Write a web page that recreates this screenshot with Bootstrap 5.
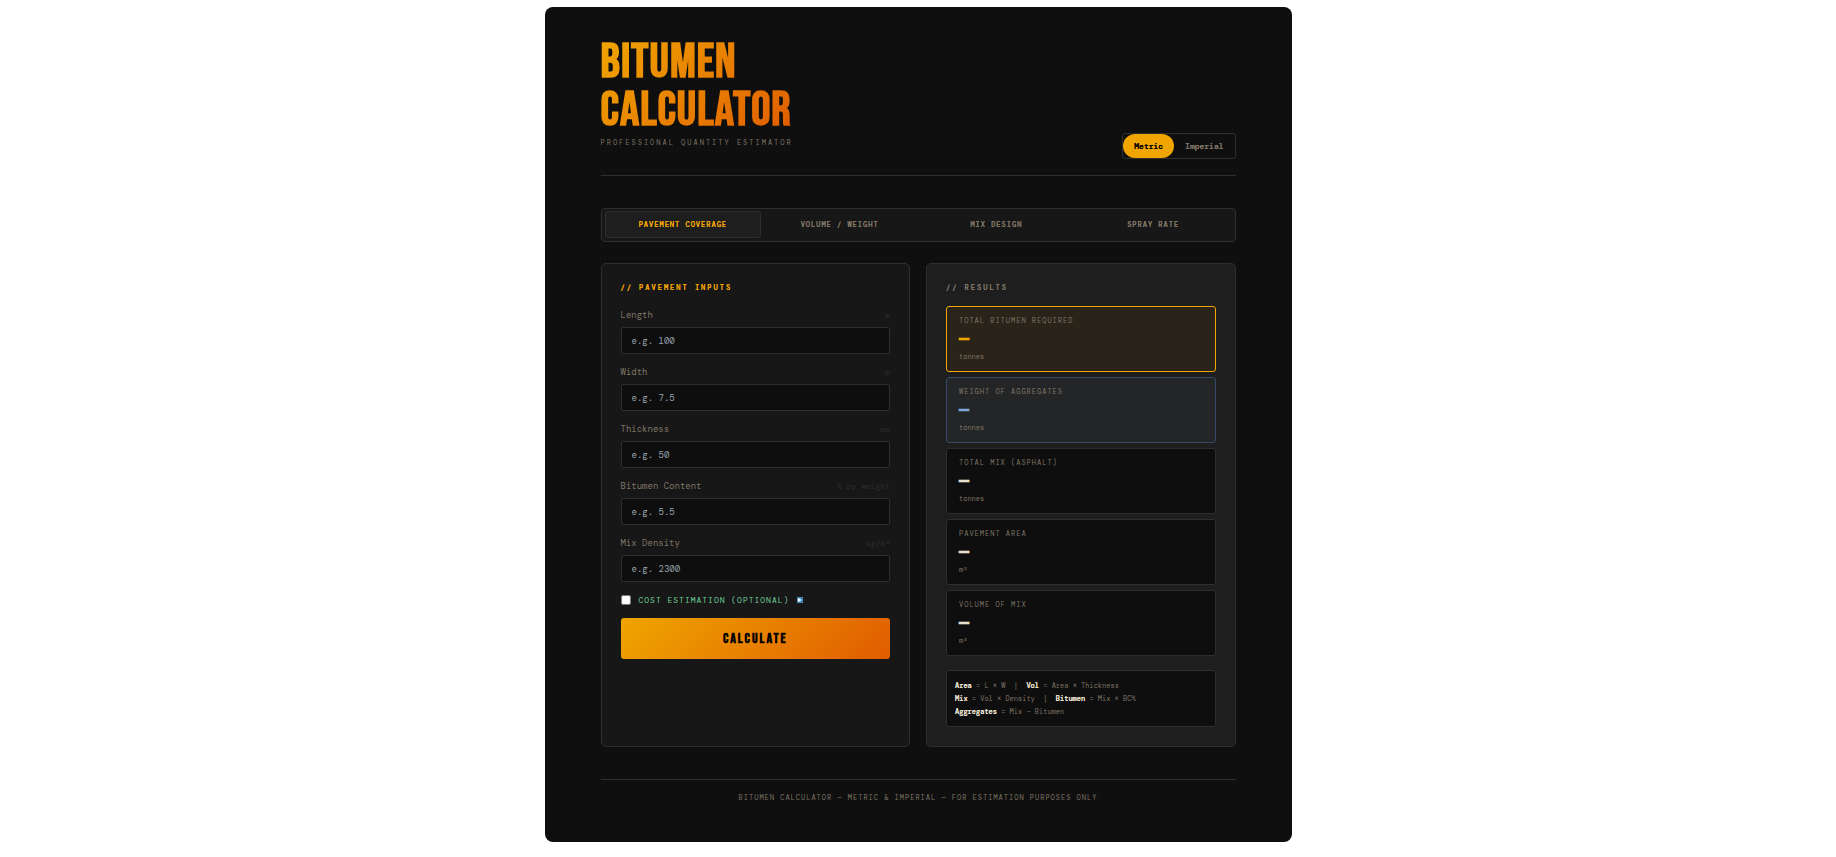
<!DOCTYPE html>
<html lang="en">
<head>
<meta charset="utf-8">
<meta name="viewport" content="width=device-width, initial-scale=1">
<title>Bitumen Calculator</title>
<link href="https://cdn.jsdelivr.net/npm/bootstrap@5.3.0/dist/css/bootstrap.min.css" rel="stylesheet">
<style>
:root{--ink:#0e0e0e;--panel:#171717;--raised:#1e1e1e;--line:#2e2e2e;--amber:#f0a500;--burnt:#e05c00;--muted:#7f7566;--cream:#e8e0d0}
body{background:#fff;font-family:"DM Mono","Liberation Mono",monospace;color:var(--muted)}
.shell{max-width:747px;margin-top:7px;padding:32px 56px 38px;border-radius:8px;background-color:var(--ink);
background-image:repeating-linear-gradient(0deg,transparent 0 3px,#ffffff02 3px 4px),repeating-linear-gradient(90deg,transparent 0 3px,#ffffff02 3px 4px)}
.display-face{font-family:"Bebas Neue","Roboto Condensed",sans-serif;font-weight:700}
.masthead{border-bottom:1px solid var(--line);padding-bottom:16px;margin-bottom:32px}
.brand-title{font-size:48px;line-height:48px;letter-spacing:1px;background:linear-gradient(135deg,var(--amber),var(--burnt));-webkit-background-clip:text;background-clip:text;color:transparent;width:min-content}
.tagline{font-size:7px;line-height:12px;letter-spacing:2px;text-transform:uppercase;margin:2px 0 10px}
.units{border:1px solid var(--line);border-radius:3px}
.units button{font-size:8px;font-weight:700;line-height:12px;padding:6px 11px;border:0;border-radius:12px;color:var(--muted);background:none}
.units button.active{background:var(--amber);color:#000}
.tabs{background:var(--panel);border:1px solid var(--line);border-radius:4px;padding:2px 3px 3px;margin-bottom:21px}
.tabs button{font-size:7px;font-weight:700;line-height:12px;letter-spacing:1px;padding:7px 0 6px;color:var(--muted);background:none;border:1px solid transparent;border-radius:3px;text-transform:uppercase}
.tabs button.active{background:var(--raised);border-color:var(--line);color:var(--amber)}
.units button,.tabs button,.panel h2,.formula strong{text-shadow:0 0 0 currentColor}
.panel{background:var(--panel);border:1px solid var(--line);border-radius:5px;padding:18px 19px 19px}
.panel.results{background:var(--raised)}
.panel h2{font-size:7px;font-weight:700;line-height:12px;letter-spacing:2px;text-transform:uppercase;margin-bottom:12px}
.panel h2.accent{color:var(--amber)}
.fields{padding:2px 0 1px}
.field-row{margin-bottom:11px}
.field-row label,.field-row .unit{font-size:9px;line-height:14px}
.field-row .unit{font-size:8px;color:#2e2e2e}
.field-row .form-control{background:var(--ink);border:1px solid var(--line);border-radius:2px;color:var(--cream);font-size:9px;line-height:13px;min-height:0;padding:7px 10px 5px;margin-top:5px}
.field-row .form-control::placeholder{color:#9aa5b0;opacity:1}
.cost{font-size:8px;line-height:12px;letter-spacing:1px;color:#6fcf97;text-transform:uppercase;margin-bottom:12px}
.cost input{width:10px;height:10px;margin:0}
.calc{font-size:14px;line-height:17px;letter-spacing:2px;padding:12px;border:0;border-radius:3px;color:#000;background:linear-gradient(135deg,var(--amber),var(--burnt))}
.tiles{gap:5px}
.tile{background:var(--ink);border:1px solid var(--line);border-radius:3px;padding:8px 12px;font-size:7px;line-height:12px}
.tile .caption-line{letter-spacing:1px;text-transform:uppercase}
.tile .figure-line{font-size:20px;line-height:20px;padding:3px 0 1px;color:var(--cream)}
.tile.primary{background:#2a231a;border-color:var(--amber)}
.tile.primary .figure-line{color:var(--amber)}
.tile.secondary{background:#242527;border-color:#344a66}
.tile.secondary .figure-line{color:#7fa8dc}
.formula{background:var(--ink);border:1px solid var(--line);border-radius:3px;padding:8px;font-size:7px;line-height:13px;margin-top:14px}
.formula strong{color:var(--cream)}
footer{border-top:1px solid var(--line);margin-top:32px;padding-top:12px;font-size:7px;letter-spacing:1px;line-height:12px;text-transform:uppercase}
</style>
</head>
<body>
<div class="shell container-fluid">
  <header class="masthead d-flex justify-content-between align-items-end">
    <div>
      <h1 class="brand-title display-face mb-0">BITUMEN CALCULATOR</h1>
      <p class="tagline">Professional Quantity Estimator</p>
    </div>
    <div class="units d-flex" role="group" aria-label="Units">
      <button type="button" class="active">Metric</button>
      <button type="button">Imperial</button>
    </div>
  </header>
  <nav class="tabs d-flex" aria-label="Calculators">
    <button type="button" class="active col">Pavement Coverage</button>
    <button type="button" class="col">Volume / Weight</button>
    <button type="button" class="col">Mix Design</button>
    <button type="button" class="col">Spray Rate</button>
  </nav>
  <main class="row gx-3">
    <div class="col-6">
      <form class="panel h-100">
        <h2 class="accent">// Pavement Inputs</h2>
        <div class="fields">
          <div class="field-row"><div class="d-flex justify-content-between"><label for="len">Length</label><span class="unit">m</span></div><input id="len" class="form-control" placeholder="e.g. 100"></div>
          <div class="field-row"><div class="d-flex justify-content-between"><label for="wid">Width</label><span class="unit">m</span></div><input id="wid" class="form-control" placeholder="e.g. 7.5"></div>
          <div class="field-row"><div class="d-flex justify-content-between"><label for="thk">Thickness</label><span class="unit">mm</span></div><input id="thk" class="form-control" placeholder="e.g. 50"></div>
          <div class="field-row"><div class="d-flex justify-content-between"><label for="bit">Bitumen Content</label><span class="unit">% by weight</span></div><input id="bit" class="form-control" placeholder="e.g. 5.5"></div>
          <div class="field-row"><div class="d-flex justify-content-between"><label for="den">Mix Density</label><span class="unit">kg/m³</span></div><input id="den" class="form-control" placeholder="e.g. 2300"></div>
        </div>
        <div class="cost d-flex align-items-center gap-2"><input type="checkbox" id="cost"><label for="cost">Cost Estimation (Optional)</label>
          <svg width="6" height="6" viewBox="0 0 6 6" aria-hidden="true"><path fill="#3b88c3" d="M0 0h6v6H0z"/><path fill="#fff" d="M1 1l4 2-4 2z"/></svg></div>
        <button type="button" class="calc display-face w-100">CALCULATE</button>
      </form>
    </div>
    <div class="col-6">
      <section class="panel results h-100">
        <h2>// Results</h2>
        <div class="d-grid tiles">
          <div class="tile primary"><div class="caption-line">Total Bitumen Required</div><div class="figure-line display-face">—</div><div>tonnes</div></div>
          <div class="tile secondary"><div class="caption-line">Weight of Aggregates</div><div class="figure-line display-face">—</div><div>tonnes</div></div>
          <div class="tile"><div class="caption-line">Total Mix (Asphalt)</div><div class="figure-line display-face">—</div><div>tonnes</div></div>
          <div class="tile"><div class="caption-line">Pavement Area</div><div class="figure-line display-face">—</div><div>m²</div></div>
          <div class="tile"><div class="caption-line">Volume of Mix</div><div class="figure-line display-face">—</div><div>m³</div></div>
        </div>
        <div class="formula"><strong>Area</strong> = L × W &nbsp;|&nbsp; <strong>Vol</strong> = Area × Thickness<br><strong>Mix</strong> = Vol × Density &nbsp;|&nbsp; <strong>Bitumen</strong> = Mix × BC%<br><strong>Aggregates</strong> = Mix − Bitumen</div>
      </section>
    </div>
  </main>
  <footer class="text-center">Bitumen Calculator — Metric &amp; Imperial — For Estimation Purposes Only</footer>
</div>
<script src="https://cdn.jsdelivr.net/npm/bootstrap@5.3.0/dist/js/bootstrap.bundle.min.js"></script>
</body>
</html>
